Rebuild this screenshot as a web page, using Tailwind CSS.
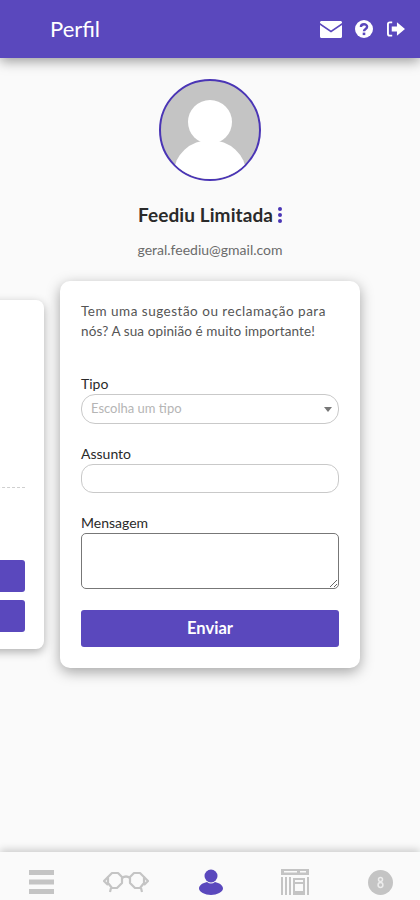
<!DOCTYPE html>
<html lang="pt">
<head>
    <meta charset="UTF-8">
    <meta name="viewport" content="width=device-width, initial-scale=1.0">
    <title>Perfil</title>
    <script src="https://cdn.jsdelivr.net/npm/@tailwindcss/browser@4"></script>
</head>
<body class="bg-[#fafafa] font-['Lato','Noto_Sans',sans-serif]">
    <div class="w-[420px] h-[900px] flex flex-col overflow-hidden relative">
        <!-- header -->
        <header class="h-[58px] shrink-0 bg-[#5a48bd] flex items-center pl-[50px] pr-[15px] shadow-[0_3px_12px_rgba(0,0,0,0.4)] relative z-10">
            <h1 class="text-white text-[22px] flex-1 pb-[2px]">Perfil</h1>
            <svg class="w-[22px] h-[17px] mr-[13px]" viewBox="0 0 22 17"><path fill="#fff" d="M0 1.5 C0 .6 .6 0 1.5 0 H20.5 C21.4 0 22 .6 22 1.5 V2 L11 9.5 0 2Z M0 4 L11 11.5 22 4 V15.5 C22 16.4 21.4 17 20.5 17 H1.5 C.6 17 0 16.4 0 15.5Z"/></svg>
            <svg class="w-[18px] h-[18px] mr-[14px]" viewBox="0 0 18 18"><circle cx="9" cy="9" r="9" fill="#fff"/><path fill="none" stroke="#5a48bd" stroke-width="2.4" d="M5.9 7 C5.9 3.4 12.1 3.4 12.1 6.8 C12.1 9 9 8.8 9 11.2"/><rect x="7.7" y="12.6" width="2.6" height="2.5" fill="#5a48bd"/></svg>
            <svg class="w-[18px] h-[16px]" viewBox="0 0 19 16"><path fill="none" stroke="#fff" stroke-width="2" d="M5.5 1 H3 C1.8 1 1 1.8 1 3 V13 C1 14.2 1.8 15 3 15 H5.5"/><path fill="#fff" d="M5 5.3 H10.5 V1 L19 8 10.5 15 V10.7 H5Z"/></svg>
        </header>

        <main class="flex-1 flex flex-col items-center pt-[21px]">
            <div class="w-[102px] h-[102px] rounded-full border-2 border-[#4a35b5] bg-[#c4c4c4] overflow-hidden shrink-0">
                <svg class="w-full h-full" viewBox="0 0 98 98"><circle cx="49" cy="41" r="22" fill="#fff"/><ellipse cx="49" cy="92" rx="36" ry="33" fill="#fff"/></svg>
            </div>
            <div class="mt-[23px] h-[22px] flex items-center gap-[5px] text-[19px] font-bold text-[#2a2a2a] tracking-[0.1px]">
                <span>Feediu Limitada</span>
                <span class="flex flex-col gap-[2px]">
                    <span class="w-[4px] h-[4px] rounded-full bg-[#4a35b5]"></span>
                    <span class="w-[4px] h-[4px] rounded-full bg-[#4a35b5]"></span>
                    <span class="w-[4px] h-[4px] rounded-full bg-[#4a35b5]"></span>
                </span>
            </div>
            <p class="mt-[15px] h-[18px] text-[14px] leading-[18px] text-[#6b6b6b]">geral.feediu@gmail.com</p>

            <div class="mt-[22px] w-[300px] flex items-center justify-start gap-[16px] ml-[-632px] shrink-0 self-center">
                <!-- previous card, mostly off screen -->
                <section class="w-[300px] h-[349px] shrink-0 bg-white rounded-[8px] shadow-[0_3px_10px_rgba(0,0,0,0.3)] flex flex-col justify-end px-[19px] pb-[17px]">
                    <div class="border-t border-dashed border-[#cfcfcf] mb-[72px]"></div>
                    <div class="h-[32px] bg-[#5a48bd] rounded-[3px] mb-[8px]"></div>
                    <div class="h-[32px] bg-[#5a48bd] rounded-[3px]"></div>
                </section>

                <!-- contact form card -->
                <section class="w-[300px] h-[387px] shrink-0 bg-white rounded-[10px] shadow-[0_4px_14px_rgba(0,0,0,0.35)] px-[21px] pt-[20px]">
                    <p class="text-[13.5px] leading-[20px] text-[#555]"><span class="tracking-[0.5px]">Tem uma sugestão ou reclamação para</span><br><span class="tracking-[0.1px]">nós? A sua opinião é muito importante!</span></p>

                    <label class="block mt-[34px] text-[14px] leading-[18px] text-[#2a2a2a]">Tipo</label>
                    <div class="mt-[1px] h-[30px] rounded-[14px] border border-[#c9c9c9] flex items-center justify-between pl-[9px] pr-[6px]">
                        <span class="text-[13px] text-[#b5b5b5]">Escolha um tipo</span>
                        <span class="w-0 h-0 border-x-[4px] border-x-transparent border-t-[5px] border-t-[#777]"></span>
                    </div>

                    <label class="block mt-[21px] text-[14px] leading-[18px] text-[#2a2a2a]">Assunto</label>
                    <input type="text" class="block w-full mt-[1px] h-[29px] rounded-[12px] border border-[#c9c9c9]">

                    <label class="block mt-[21px] text-[14px] leading-[18px] text-[#2a2a2a]">Mensagem</label>
                    <textarea class="block w-full h-[56px] rounded-[5px] border border-[#777] mt-[1px]"></textarea>

                    <button class="mt-[21px] w-full h-[37px] rounded-[3px] bg-[#5a48bd] text-white text-[16.5px] font-bold">Enviar</button>
                </section>
            </div>
        </main>

        <!-- bottom nav -->
        <nav class="h-[48px] shrink-0 bg-[#fafafa] shadow-[0_-2px_8px_rgba(0,0,0,0.2)] flex items-center pl-[28px] pt-[12px]">
            <svg class="w-[26px] h-[26px]" viewBox="0 0 26 26"><path fill="#c4c4c4" d="M1 1 H26 V6 H1Z M1 10.5 H26 V15.5 H1Z M1 20 H26 V25 H1Z"/></svg>
            <svg class="ml-[49px] w-[46px] h-[24px]" viewBox="0 0 46 24"><g fill="none" stroke="#c4c4c4" stroke-width="2.2" stroke-linejoin="round"><path d="M5 7 L9 3 H15 L19 7 V13 L14 18 H9 L5 13Z"/><path d="M27 7 L31 3 H37 L41 7 V13 L37 18 H32 L27 13Z"/><path d="M19 8 Q23 5 27 8 M5 7 L1 11 5 15 M41 7 L45 11 41 15 M8 18 L7 22 M38 18 L39 22"/></g></svg>
            <svg class="ml-[50px] w-[24px] h-[26px]" viewBox="0 0 24 26"><circle cx="12" cy="7" r="6.5" fill="#5a48bd"/><path fill="#5a48bd" d="M8 13 Q12 16 16 13 C20 14 24 16 24 19.5 C24 23 18 26 12 26 C6 26 0 23 0 19.5 C0 16 4 14 8 13Z"/></svg>
            <svg class="ml-[58px] w-[28px] h-[26px]" viewBox="0 0 28 26"><g fill="#c4c4c4"><rect x="0" y="0" width="28" height="6"/><rect x="0" y="8" width="2" height="18"/><rect x="4" y="8" width="2" height="18"/><rect x="8" y="8" width="2" height="18"/><rect x="26" y="8" width="2" height="18"/><path fill-rule="evenodd" d="M12 9 H24 V26 H12Z M14 15 V22 H22 V15Z M14 11 V13 H22 V11Z"/></g><rect x="3" y="2" width="13" height="1.5" fill="#fafafa"/><rect x="19" y="2" width="6" height="1.5" fill="#fafafa"/></svg>
            <svg class="ml-[59px] w-[25px] h-[25px]" viewBox="0 0 25 25"><circle cx="12.5" cy="12.5" r="12.5" fill="#c4c4c4"/><g fill="none" stroke="#ececec" stroke-width="1.5"><circle cx="12.5" cy="9.5" r="2"/><circle cx="12.5" cy="15" r="2.4"/></g></svg>
        </nav>
    </div>
</body>
</html>
